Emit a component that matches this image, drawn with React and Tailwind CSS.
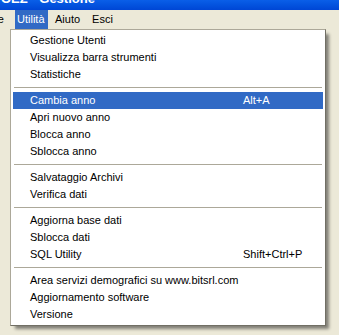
import React from "react"

const groups = [
  [["Gestione Utenti"], ["Visualizza barra strumenti"], ["Statistiche"]],
  [["Cambia anno", "Alt+A", true], ["Apri nuovo anno"], ["Blocca anno"], ["Sblocca anno"]],
  [["Salvataggio Archivi"], ["Verifica dati"]],
  [["Aggiorna base dati"], ["Sblocca dati"], ["SQL Utility", "Shift+Ctrl+P"]],
  [["Area servizi demografici su www.bitsrl.com"], ["Aggiornamento software"], ["Versione"]],
]

function Item({ label, shortcut, active }) {
  return (
    <div
      className={
        "flex h-[17px] items-center " +
        (active ? "bg-[#316ac5] text-white" : "text-black")
      }
    >
      <span className="pl-[17px] w-[230px] whitespace-nowrap">{label}</span>
      {shortcut && <span className="whitespace-nowrap">{shortcut}</span>}
    </div>
  )
}

export default function App() {
  return (
    <div
      className="w-[339px] h-[335px] overflow-hidden bg-[#ece9d8] text-[11px] leading-none"
      style={{ fontFamily: "Tahoma, 'Liberation Sans', Arial, sans-serif" }}
    >
      {/* title bar, only the bottom edge is visible */}
      <div className="h-[10px] overflow-hidden bg-gradient-to-b from-[#0a5fe8] to-[#0046d5]">
        <div className="-mt-[8px] pl-[1px] text-[13px] font-bold text-white whitespace-nowrap leading-[14px]">
          OEZ - Gestione
        </div>
      </div>

      {/* menu bar */}
      <div className="flex h-[19px] items-stretch">
        <div className="w-[15px] flex items-center justify-end pr-[11px] whitespace-nowrap">File</div>
        <div className="flex items-center pl-[2px] bg-[#316ac5] text-white w-[33px]">Utilità</div>
        <div className="flex items-center pl-[7px] pr-[12px]">Aiuto</div>
        <div className="flex items-center">Esci</div>
      </div>

      {/* dropdown */}
      <div className="flex">
        <div className="w-[10px]" />
        <div className="w-[316px] bg-white border border-t-[#aca899] border-l-[#aca899] border-r-[#716f64] border-b-[#716f64] p-[2px] shadow-[4px_4px_3px_-1px_rgba(0,0,0,0.45)]">
          {groups.map((g, gi) => (
            <div key={gi}>
              {gi > 0 && (
                <div className="h-[9px] flex items-center px-[1px]">
                  <div className="h-px w-full bg-[#aca899]" />
                </div>
              )}
              {g.map(([label, shortcut, active]) => (
                <Item key={label} label={label} shortcut={shortcut} active={active} />
              ))}
            </div>
          ))}
        </div>
      </div>
    </div>
  )
}
